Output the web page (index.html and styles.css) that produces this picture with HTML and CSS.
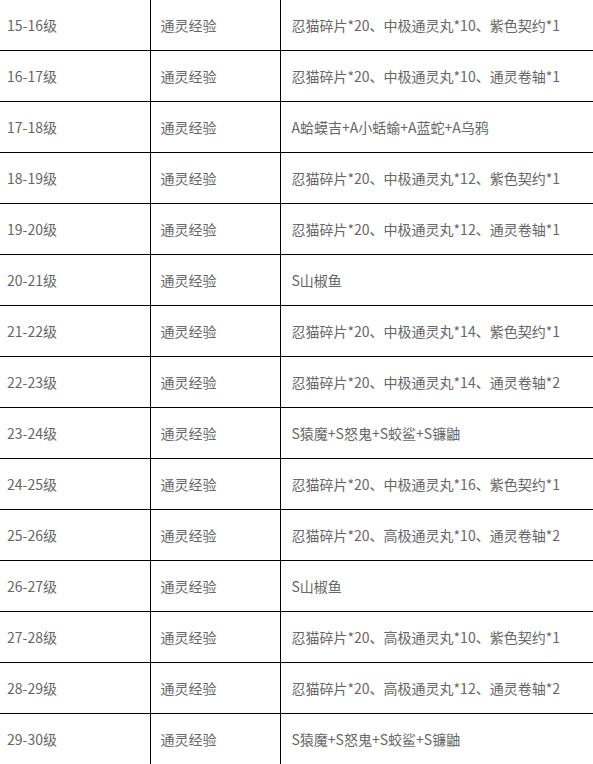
FILE: index.html
```html
<!DOCTYPE html>
<html lang="zh">
<head>
<meta charset="utf-8">
<link rel="stylesheet" href="styles.css">
</head>
<body>
<table class="grid">
  <colgroup>
    <col class="c-level">
    <col class="c-type">
    <col class="c-reward">
  </colgroup>
  <tbody>
    <tr><td>15-16级</td><td>通灵经验</td><td>忍猫碎片*20、中极通灵丸*10、紫色契约*1</td></tr>
    <tr><td>16-17级</td><td>通灵经验</td><td>忍猫碎片*20、中极通灵丸*10、通灵卷轴*1</td></tr>
    <tr><td>17-18级</td><td>通灵经验</td><td>A蛤蟆吉+A小蛞蝓+A蓝蛇+A乌鸦</td></tr>
    <tr><td>18-19级</td><td>通灵经验</td><td>忍猫碎片*20、中极通灵丸*12、紫色契约*1</td></tr>
    <tr><td>19-20级</td><td>通灵经验</td><td>忍猫碎片*20、中极通灵丸*12、通灵卷轴*1</td></tr>
    <tr><td>20-21级</td><td>通灵经验</td><td>S山椒鱼</td></tr>
    <tr><td>21-22级</td><td>通灵经验</td><td>忍猫碎片*20、中极通灵丸*14、紫色契约*1</td></tr>
    <tr><td>22-23级</td><td>通灵经验</td><td>忍猫碎片*20、中极通灵丸*14、通灵卷轴*2</td></tr>
    <tr><td>23-24级</td><td>通灵经验</td><td>S猿魔+S怒鬼+S蛟鲨+S镰鼬</td></tr>
    <tr><td>24-25级</td><td>通灵经验</td><td>忍猫碎片*20、中极通灵丸*16、紫色契约*1</td></tr>
    <tr><td>25-26级</td><td>通灵经验</td><td>忍猫碎片*20、高极通灵丸*10、通灵卷轴*2</td></tr>
    <tr><td>26-27级</td><td>通灵经验</td><td>S山椒鱼</td></tr>
    <tr><td>27-28级</td><td>通灵经验</td><td>忍猫碎片*20、高极通灵丸*10、紫色契约*1</td></tr>
    <tr><td>28-29级</td><td>通灵经验</td><td>忍猫碎片*20、高极通灵丸*12、通灵卷轴*2</td></tr>
    <tr><td>29-30级</td><td>通灵经验</td><td>S猿魔+S怒鬼+S蛟鲨+S镰鼬</td></tr>
  </tbody>
</table>
</body>
</html>
```
FILE: styles.css
```css
html, body {
  margin: 0;
  padding: 0;
  background: #fff;
  overflow: hidden;
}
.grid {
  border-collapse: collapse;
  table-layout: fixed;
  width: 100%;
  font-family: "Noto Sans CJK SC", "Microsoft YaHei", sans-serif;
  font-size: 14px;
  color: #666;
}
.c-level { width: 150px; }
.c-type { width: 130px; }
.grid td {
  border: 1px solid #000;
  height: 51px;
  padding: 0 0 0 10px;
  box-sizing: border-box;
  vertical-align: middle;
  white-space: nowrap;
  line-height: 20px;
}
.grid td:first-child {
  border-left: none;
  padding-left: 7px;
}
.grid td:last-child {
  border-right: none;
  padding-left: 11px;
}
.grid tr:first-child td {
  border-top: none;
  height: 50px;
}
```
